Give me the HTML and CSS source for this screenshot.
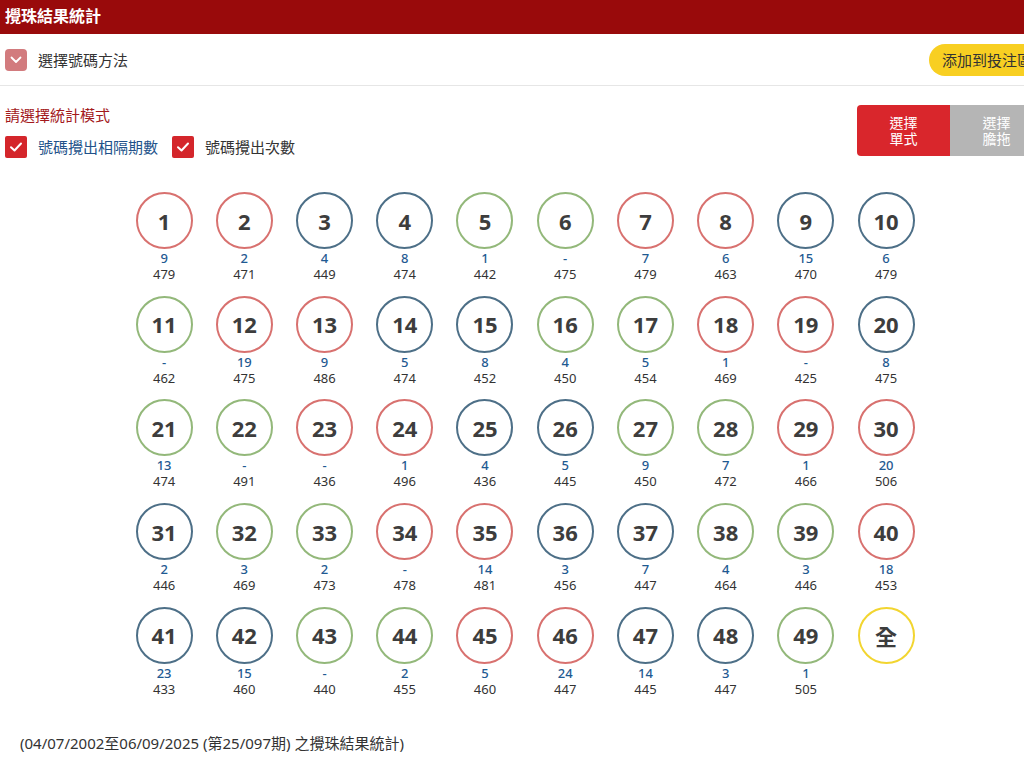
FILE: index.html
```html
<!DOCTYPE html>
<html lang="zh-Hant">
<head>
<meta charset="utf-8">
<title>攪珠結果統計</title>
<link rel="stylesheet" href="styles.css">
</head>
<body>
<div class="page">
  <header class="topbar">攪珠結果統計</header>
  <div class="method-bar">
    <span class="chev">
      <svg width="12" height="8" viewBox="0 0 12 8"><path d="M1.5 1.5 L6 6 L10.5 1.5" fill="none" stroke="#fff" stroke-width="1.8" stroke-linecap="round" stroke-linejoin="round"/></svg>
    </span>
    <span class="method-label">選擇號碼方法</span>
    <button class="add-btn">添加到投注區</button>
  </div>
  <div class="mode">
    <div class="mode-left">
      <div class="mode-title">請選擇統計模式</div>
      <div class="checks">
        <label class="check">
          <span class="box"><svg width="14" height="12" viewBox="0 0 14 12"><path d="M2 6.2 L5.5 9.5 L12 2.5" fill="none" stroke="#fff" stroke-width="2" stroke-linecap="round" stroke-linejoin="round"/></svg></span>
          <span class="check-label blue">號碼攪出相隔期數</span>
        </label>
        <label class="check">
          <span class="box"><svg width="14" height="12" viewBox="0 0 14 12"><path d="M2 6.2 L5.5 9.5 L12 2.5" fill="none" stroke="#fff" stroke-width="2" stroke-linecap="round" stroke-linejoin="round"/></svg></span>
          <span class="check-label">號碼攪出次數</span>
        </label>
      </div>
    </div>
    <div class="seg">
      <button class="seg-btn active"><span class="ln">選擇</span><span class="ln">單式</span></button>
      <button class="seg-btn"><span class="ln">選擇</span><span class="ln">膽拖</span></button>
    </div>
  </div>
  <div class="balls" id="balls"></div>
  <div class="foot">(04/07/2002至06/09/2025 (第25/097期) 之攪珠結果統計)</div>
</div>
<script src="script.js"></script>
</body>
</html>
```
FILE: script.js
```js
const data = [
  [9,479],[2,471],[4,449],[8,474],[1,442],['-',475],[7,479],[6,463],[15,470],[6,479],
  ['-',462],[19,475],[9,486],[5,474],[8,452],[4,450],[5,454],[1,469],['-',425],[8,475],
  [13,474],['-',491],['-',436],[1,496],[4,436],[5,445],[9,450],[7,472],[1,466],[20,506],
  [2,446],[3,469],[2,473],['-',478],[14,481],[3,456],[7,447],[4,464],[3,446],[18,453],
  [23,433],[15,460],['-',440],[2,455],[5,460],[24,447],[14,445],[3,447],[1,505]
];
const red = [1,2,7,8,12,13,18,19,23,24,29,30,34,35,40,45,46];
const blue = [3,4,9,10,14,15,20,25,26,31,36,37,41,42,47,48];
const wrap = document.getElementById('balls');
let html = '';
data.forEach((d, i) => {
  const n = i + 1;
  const c = red.includes(n) ? 'red' : blue.includes(n) ? 'blue' : 'green';
  html += '<div class="cell"><div class="ball ' + c + '">' + n + '</div>' +
    '<div class="gap">' + d[0] + '</div><div class="cnt">' + d[1] + '</div></div>';
});
html += '<div class="cell"><div class="ball yellow all">全</div></div>';
wrap.innerHTML = html;
```
FILE: styles.css
```css
* { box-sizing: border-box; }
html, body { margin: 0; padding: 0; background: #fff; }
body {
  font-family: "Noto Sans", "Noto Sans CJK TC", sans-serif;
  color: #333;
  overflow: hidden;
}
.page { width: 1024px; overflow: hidden; }
.topbar {
  height: 34px;
  line-height: 33px;
  background: #990a0b;
  color: #fff;
  font-weight: bold;
  font-size: 16px;
  padding-left: 5px;
}
.method-bar {
  height: 52px;
  border-bottom: 1px solid #e6e6e6;
  display: flex;
  align-items: center;
  padding-left: 5px;
}
.chev {
  width: 22px;
  height: 22px;
  border-radius: 4px;
  background: #d27b7e;
  display: flex;
  align-items: center;
  justify-content: center;
  flex-shrink: 0;
}
.method-label { margin-left: 11px; font-size: 15px; color: #333; }
.add-btn {
  margin-left: auto;
  margin-right: -22px;
  flex-shrink: 0;
  height: 32px;
  width: 117px;
  border: none;
  border-radius: 16px;
  background: #f8cf22;
  font-family: inherit;
  font-size: 15px;
  color: #333;
  padding: 0 0 0 13px;
  text-align: left;
  white-space: nowrap;
  overflow: hidden;
}
.mode {
  display: flex;
  align-items: flex-start;
  padding: 19px 0 0 5px;
}
.mode-title { font-size: 15px; line-height: 20px; color: #a3191c; }
.checks { display: flex; margin-top: 11px; }
.check { display: flex; align-items: center; margin-right: 14px; }
.box {
  width: 22px;
  height: 22px;
  border-radius: 2px;
  background: #d4262b;
  display: flex;
  align-items: center;
  justify-content: center;
}
.check-label { margin-left: 11px; font-size: 15px; line-height: 22px; color: #333; }
.check-label.blue { color: #22528a; }
.seg {
  margin-left: auto;
  margin-right: -19px;
  display: flex;
}
.seg-btn {
  width: 93px;
  height: 51px;
  border: none;
  font-family: inherit;
  font-size: 14px;
  color: #fff;
  background: #b5b5b5;
  padding: 0;
  display: flex;
  flex-direction: column;
  align-items: center;
  justify-content: center;
}
.seg-btn .ln { display: block; line-height: 16px; height: 16px; }
.seg-btn.active { background: #d9262c; border-radius: 4px 0 0 4px; }
.balls {
  display: grid;
  grid-template-columns: repeat(10, 80.22px);
  grid-auto-rows: 103.7px;
  margin: 34px 0 0 124px;
}
.cell { display: flex; flex-direction: column; align-items: center; }
.ball {
  width: 57px;
  height: 57px;
  border-radius: 50%;
  border: 2px solid #ccc;
  display: flex;
  align-items: center;
  justify-content: center;
  font-size: 22px;
  font-weight: bold;
  color: #3d3d3d;
  margin-bottom: 1px;
}
.ball.red { border-color: #d8716f; }
.ball.blue { border-color: #4d6f87; }
.ball.green { border-color: #93b87a; }
.ball.yellow { border-color: #f2d530; }
.gap { font-size: 13px; line-height: 16px; font-weight: 500; color: #1f5a92; }
.cnt { font-size: 13px; line-height: 16px; color: #333; }
.foot {
  margin: 23px 0 0 20px;
  font-size: 15px;
  line-height: 20px;
  color: #333;
}
```
